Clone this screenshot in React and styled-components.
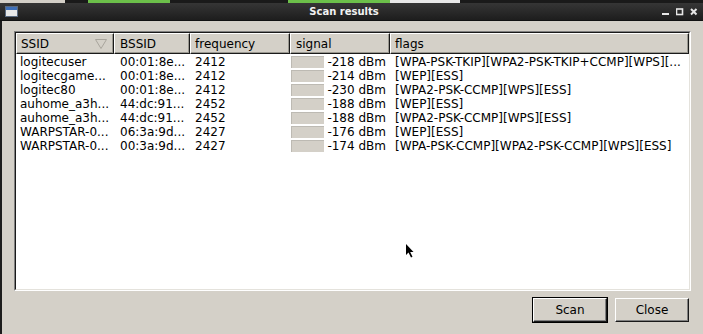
import React from "react";
import styled, { createGlobalStyle } from "styled-components";

const GlobalStyle = createGlobalStyle`
  html, body {
    margin: 0;
    padding: 0;
    background: #d4d0c8;
  }
  body {
    font-family: "DejaVu Sans", "Liberation Sans", sans-serif;
    font-size: 12px;
    color: #000;
  }
`;

const Screen = styled.div`
  width: 703px;
  height: 334px;
  display: flex;
  flex-direction: column;
  overflow: hidden;
  position: relative;
`;

const TopStrip = styled.div`
  height: 3px;
  display: flex;
  background: #1a1a1a;
`;

const StripPart = styled.div`
  width: ${({ w }) => w}px;
  background: ${({ color }) => color};
`;

const TitleBar = styled.div`
  height: 17px;
  display: flex;
  align-items: center;
  padding: 0 5px 0 5px;
  background: linear-gradient(#363636, #1d1d1d);
  border-bottom: 1px solid #111;
`;

const TitleText = styled.div`
  flex: 1;
  text-align: center;
  color: #f2f2f2;
  font-weight: bold;
  font-size: 10px;
  padding-left: 8px;
`;

const TitleButtons = styled.div`
  display: flex;
  align-items: center;
  gap: 6px;
`;

const Body = styled.div`
  flex: 1;
  display: flex;
  flex-direction: column;
  border-left: 2px solid #1c1c1c;
  padding: 10px 12px 12px 12px;
`;

const ListFrame = styled.div`
  height: 258px;
  border: 1px solid;
  border-color: #808080 #fff #fff #808080;
`;

const ListInner = styled.div`
  height: 100%;
  box-sizing: border-box;
  border: 1px solid;
  border-color: #1a1a1a #e4e2dc #e4e2dc #1a1a1a;
  background: #fff;
  overflow: hidden;
`;

const cols = "98px 76px 100px 100px 1fr";

const HeaderRow = styled.div`
  display: grid;
  grid-template-columns: ${cols};
  height: 21px;
  background: #d4d0c8;
`;

const HeaderCell = styled.div`
  display: flex;
  align-items: center;
  justify-content: space-between;
  padding: 0 6px 0 ${({ pl }) => pl || 4}px;
  border-top: 1px solid #fff;
  border-left: 1px solid #fff;
  border-right: 1px solid #1a1a1a;
  border-bottom: 1px solid #1a1a1a;
  box-shadow: inset -1px -1px 0 #9a9890;
  font-size: 12px;
`;

const Rows = styled.div`
  padding-top: 1px;
`;

const Row = styled.div`
  display: grid;
  grid-template-columns: ${cols};
  height: 14px;
  line-height: 14px;
  font-size: 12px;
  white-space: nowrap;
`;

const Cell = styled.div`
  padding-left: ${({ pl }) => pl || 5}px;
  overflow: hidden;
`;

const SignalCell = styled.div`
  display: flex;
  align-items: center;
  justify-content: space-between;
  padding: 0 4px 0 1px;
`;

const SignalBar = styled.div`
  width: 32px;
  height: 11px;
  background: #d4d0c8;
  border-top: 1px solid #bdbab3;
  border-left: 1px solid #bdbab3;
`;

const ButtonRow = styled.div`
  display: flex;
  justify-content: flex-end;
  gap: 8px;
  margin-top: 7px;
  padding-right: 2px;
`;

const Button = styled.button`
  width: 74px;
  height: 24px;
  box-sizing: border-box;
  background: #d4d0c8;
  font-family: "DejaVu Sans", "Liberation Sans", sans-serif;
  font-size: 12px;
  color: #000;
  padding: 0;
  border: 1px solid;
  border-color: #fff #1a1a1a #1a1a1a #fff;
  box-shadow: inset -1px -1px 0 #808080;
  outline: ${({ primary }) => (primary ? "1px solid #000" : "none")};
`;

const Cursor = styled.svg`
  position: absolute;
  left: 405px;
  top: 243px;
`;

const networks = [
  ["logitecuser", "00:01:8e...", "2412", "-218 dBm", "[WPA-PSK-TKIP][WPA2-PSK-TKIP+CCMP][WPS][..."],
  ["logitecgame...", "00:01:8e...", "2412", "-214 dBm", "[WEP][ESS]"],
  ["logitec80", "00:01:8e...", "2412", "-230 dBm", "[WPA2-PSK-CCMP][WPS][ESS]"],
  ["auhome_a3h...", "44:dc:91...", "2452", "-188 dBm", "[WEP][ESS]"],
  ["auhome_a3h...", "44:dc:91...", "2452", "-188 dBm", "[WPA2-PSK-CCMP][WPS][ESS]"],
  ["WARPSTAR-0...", "06:3a:9d...", "2427", "-176 dBm", "[WEP][ESS]"],
  ["WARPSTAR-0...", "00:3a:9d...", "2427", "-174 dBm", "[WPA-PSK-CCMP][WPA2-PSK-CCMP][WPS][ESS]"],
];

const WindowIcon = () => (
  <svg width="13" height="11" viewBox="0 0 13 11">
    <rect x="0.5" y="0.5" width="12" height="10" fill="#e8e8e8" stroke="#5a6a80" />
    <rect x="1" y="1" width="11" height="3" fill="#3d6fb8" />
  </svg>
);

const App = () => (
  <>
    <GlobalStyle />
    <Screen>
      <TopStrip>
        <StripPart w={65} color="#d4d0c8" />
        <StripPart w={23} color="#1a1a1a" />
        <StripPart w={82} color="#6cc04a" />
        <StripPart w={118} color="#1a1a1a" />
        <StripPart w={102} color="#6cc04a" />
        <StripPart w={70} color="#e8e8e8" />
      </TopStrip>
      <TitleBar>
        <WindowIcon />
        <TitleText>Scan results</TitleText>
        <TitleButtons>
          <svg width="8" height="8" viewBox="0 0 8 8">
            <rect x="0" y="5" width="7" height="2" fill="#e6e6e6" />
          </svg>
          <svg width="8" height="8" viewBox="0 0 8 8">
            <rect x="0.5" y="1" width="6" height="5.5" fill="none" stroke="#e6e6e6" strokeWidth="1.6" />
          </svg>
          <svg width="8" height="8" viewBox="0 0 8 8">
            <path d="M1 1 L6.5 6.5 M6.5 1 L1 6.5" stroke="#e6e6e6" strokeWidth="2" />
          </svg>
        </TitleButtons>
      </TitleBar>
      <Body>
        <ListFrame>
          <ListInner>
            <HeaderRow>
              <HeaderCell pl={4}>
                SSID
                <svg width="12" height="10" viewBox="0 0 12 10">
                  <path d="M0.5 0.5 H11.5 L6 9.5 Z" fill="none" stroke="#a8a49c" />
                </svg>
              </HeaderCell>
              <HeaderCell pl={5}>BSSID</HeaderCell>
              <HeaderCell pl={4}>frequency</HeaderCell>
              <HeaderCell pl={5}>signal</HeaderCell>
              <HeaderCell pl={4}>flags</HeaderCell>
            </HeaderRow>
            <Rows>
              {networks.map(([ssid, bssid, freq, signal, flags], i) => (
                <Row key={i}>
                  <Cell pl={4}>{ssid}</Cell>
                  <Cell pl={6}>{bssid}</Cell>
                  <Cell pl={5}>{freq}</Cell>
                  <SignalCell>
                    <SignalBar />
                    <span>{signal}</span>
                  </SignalCell>
                  <Cell pl={5}>{flags}</Cell>
                </Row>
              ))}
            </Rows>
          </ListInner>
        </ListFrame>
        <ButtonRow>
          <Button primary>Scan</Button>
          <Button>Close</Button>
        </ButtonRow>
      </Body>
      <Cursor width="10" height="16" viewBox="0 0 10 16">
        <path d="M1 1 L1 12 L3.5 9.5 L6 14.5 L7.5 13.8 L5.2 9 L8.5 9 Z" fill="#000" />
      </Cursor>
    </Screen>
  </>
);

export default App;
